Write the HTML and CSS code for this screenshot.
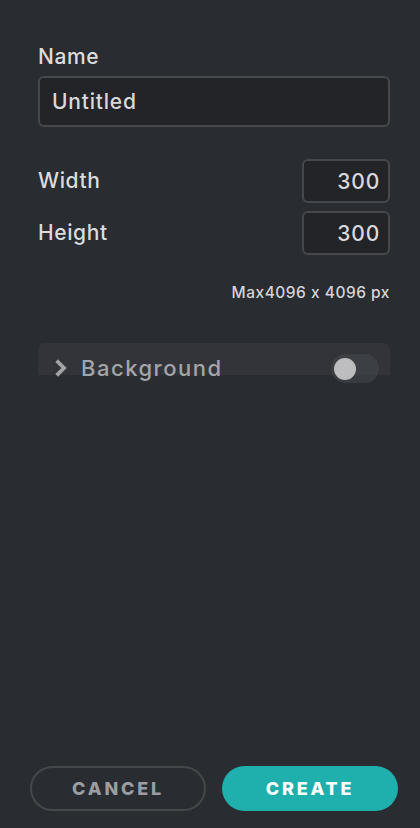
FILE: index.html
```html
<!DOCTYPE html>
<html>
<head>
<meta charset="utf-8">
<link rel="stylesheet" href="styles.css">
</head>
<body>
<div class="form">
  <div class="label">Name</div>
  <div class="input name-input">Untitled</div>
  <div class="dims">
    <div class="dim-row">
      <span class="label">Width</span>
      <div class="input num-input">300</div>
    </div>
    <div class="dim-row">
      <span class="label">Height</span>
      <div class="input num-input">300</div>
    </div>
  </div>
  <div class="max">Max4096 x 4096 px</div>
  <div class="section">
    <div class="section-head">
      <svg class="chev" width="12" height="18" viewBox="0 0 12 18"><path d="M3 3 L9 9 L3 15" fill="none" stroke="#a3a4a8" stroke-width="3.8" stroke-linecap="square" stroke-linejoin="miter"/></svg>
      <span class="section-title">Background</span>
      <span class="toggle"><span class="knob"></span></span>
    </div>
  </div>
</div>
<div class="footer">
  <button class="btn cancel">CANCEL</button>
  <button class="btn create">CREATE</button>
</div>
</body>
</html>
```
FILE: styles.css
```css
html, body {
  margin: 0;
  padding: 0;
}
body {
  width: 420px;
  height: 828px;
  background: #292c31;
  font-family: Inter, "Open Sans", sans-serif;
  font-feature-settings: "calt" 0;
  color: #dcdcdf;
  display: flex;
  flex-direction: column;
  overflow: hidden;
}
.form {
  padding: 45px 30px 0 38px;
  display: flex;
  flex-direction: column;
}
.label {
  font-size: 21px;
  font-weight: 500;
  line-height: 24px;
  color: #dcdcdf;
  letter-spacing: 0.6px;
}
.form > .label {
  margin-bottom: 7px;
}
.input {
  box-sizing: border-box;
  background: #222428;
  border: 2px solid #45484d;
  border-radius: 6px;
  font-size: 21px;
  font-weight: 500;
  color: #d9d9dc;
  letter-spacing: 0.8px;
  display: flex;
  align-items: center;
}
.name-input {
  height: 51px;
  padding-left: 12px;
}
.dims {
  margin-top: 32px;
  display: flex;
  flex-direction: column;
  gap: 8px;
}
.dim-row {
  display: flex;
  justify-content: space-between;
  align-items: center;
  height: 44px;
}
.num-input {
  width: 88px;
  height: 44px;
  justify-content: flex-end;
  padding-right: 8px;
}
.max {
  margin-top: 28px;
  text-align: right;
  font-size: 15.5px;
  font-weight: 500;
  line-height: 20px;
  color: #d4d4d7;
  letter-spacing: 0.5px;
}
.section {
  margin-top: 40px;
  height: 32px;
  background: #323439;
  border-radius: 6px 6px 0 0;
}
.section-head {
  margin-top: 10px;
  height: 29px;
  display: flex;
  align-items: center;
  padding: 0 11px 0 17px;
}
.chev {
  display: block;
  margin-right: 14px;
}
.section-title {
  flex: 1;
  font-size: 22px;
  font-weight: 500;
  color: #a4a5a9;
  letter-spacing: 1.5px;
}
.toggle {
  width: 48px;
  height: 29px;
  border-radius: 15px;
  background: rgba(70, 72, 78, 0.55);
  display: flex;
  align-items: center;
  padding-left: 3px;
  box-sizing: border-box;
  margin-top: 2px;
}
.knob {
  width: 22px;
  height: 22px;
  border-radius: 50%;
  background: #bdbdc0;
}
.footer {
  margin-top: auto;
  padding: 0 22px 17px 30px;
  display: flex;
  gap: 16px;
}
.btn {
  width: 176px;
  height: 45px;
  border-radius: 23px;
  font-family: Inter, "Open Sans", sans-serif;
  font-size: 18px;
  font-weight: 800;
  letter-spacing: 2.8px;
  box-sizing: border-box;
  cursor: pointer;
  padding: 0;
}
.cancel {
  background: transparent;
  border: 2px solid #45474b;
  color: #9c9da1;
}
.create {
  background: #1fb0ad;
  border: none;
  color: #ffffff;
}
```
